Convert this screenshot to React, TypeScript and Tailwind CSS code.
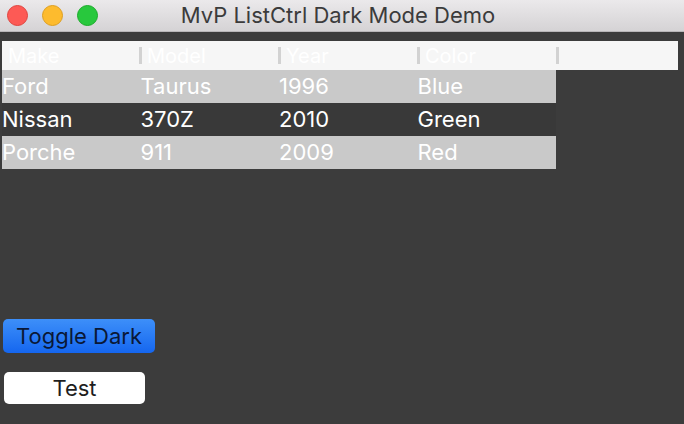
import React from 'react'

type Car = { make: string; model: string; year: string; color: string }

const cars: Car[] = [
  { make: 'Ford', model: 'Taurus', year: '1996', color: 'Blue' },
  { make: 'Nissan', model: '370Z', year: '2010', color: 'Green' },
  { make: 'Porche', model: '911', year: '2009', color: 'Red' },
]

const columns = ['Make', 'Model', 'Year', 'Color']

function Cell({ children }: { children: React.ReactNode }) {
  return <div className="w-[139px] flex items-center">{children}</div>
}

export default function App() {
  return (
    <div
      className="w-[684px] h-[424px] flex flex-col bg-[#3c3c3c] overflow-hidden"
      style={{ fontFamily: 'Inter, "Noto Sans", sans-serif' }}
    >
      {/* title bar */}
      <div className="h-[32px] shrink-0 flex items-center relative bg-gradient-to-b from-[#ebe9eb] to-[#d5d3d5] border-b border-[#b8b6b8]">
        <div className="flex items-center gap-[14px] pl-[7px]">
          <span className="w-[21px] h-[21px] rounded-full bg-[#fd5a55] border border-[#e0443e]" />
          <span className="w-[21px] h-[21px] rounded-full bg-[#fdbb2e] border border-[#de9f1f]" />
          <span className="w-[21px] h-[21px] rounded-full bg-[#28c83d] border border-[#1aab29]" />
        </div>
        <div className="absolute inset-0 flex items-center justify-center pr-[8px] text-[22px] text-[#3b3b3b]">
          MvP ListCtrl Dark Mode Demo
        </div>
      </div>

      {/* list */}
      <div className="mt-[9px] ml-[2px] flex flex-col">
        <div className="w-[676px] h-[29px] bg-[#f6f6f6] flex text-[20px] text-white">
          <div className="w-[137px] flex items-center pl-[6px]">{columns[0]}</div>
          {columns.slice(1).map((c) => (
            <div key={c} className="flex items-center">
              <span className="w-[3px] h-[17px] bg-[#d2d2d2]" />
              <span className="w-[136px] pl-[5px]">{c}</span>
            </div>
          ))}
          <div className="flex items-center">
            <span className="w-[3px] h-[17px] bg-[#d2d2d2]" />
          </div>
        </div>
        {cars.map((car, i) => (
          <div
            key={car.make}
            className={`w-[554px] h-[33px] flex text-[22px] text-white ${
              i % 2 === 0 ? 'bg-[#c9c9c9]' : 'bg-[#393939]'
            }`}
          >
            <Cell>{car.make}</Cell>
            <Cell>{car.model}</Cell>
            <Cell>{car.year}</Cell>
            <Cell>{car.color}</Cell>
          </div>
        ))}
      </div>

      {/* buttons */}
      <div className="mt-[150px] ml-[3px] flex flex-col gap-[19px]">
        <button className="w-[152px] h-[34px] rounded-[5px] bg-gradient-to-b from-[#3d8ff9] to-[#1566ef] text-[#0a1836] text-[22px] flex items-center justify-center">
          Toggle Dark
        </button>
        <button className="ml-[1px] w-[141px] h-[32px] rounded-[5px] bg-white text-[#1e1e1e] text-[22px] flex items-center justify-center">
          Test
        </button>
      </div>
    </div>
  )
}
